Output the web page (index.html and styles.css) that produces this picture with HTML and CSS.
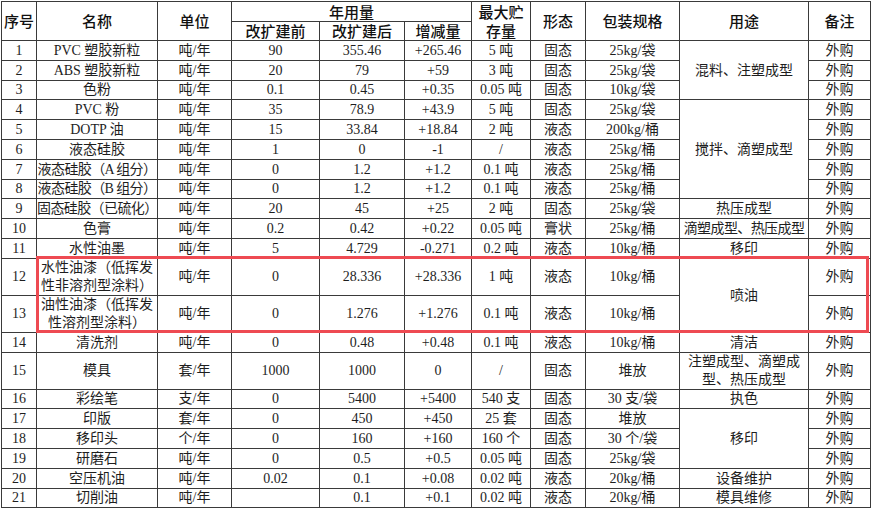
FILE: index.html
```html
<!DOCTYPE html>
<html lang="zh-CN">
<head>
<meta charset="utf-8">
<title>原辅材料用量表</title>
<link rel="stylesheet" href="styles.css">
</head>
<body>
<div class="wrap">
<table class="tbl">
<colgroup>
<col class="c1"><col class="c2"><col class="c3"><col class="c4"><col class="c5"><col class="c6"><col class="c7"><col class="c8"><col class="c9"><col class="c10"><col class="c11">
</colgroup>
<thead>
<tr class="h1">
<th rowspan="2">序号</th><th rowspan="2">名称</th><th rowspan="2">单位</th><th colspan="3">年用量</th><th rowspan="2" class="two">最大贮<br>存量</th><th rowspan="2">形态</th><th rowspan="2">包装规格</th><th rowspan="2">用途</th><th rowspan="2">备注</th>
</tr>
<tr class="h2"><th>改扩建前</th><th>改扩建后</th><th>增减量</th></tr>
</thead>
<tbody>
<tr><td>1</td><td>PVC 塑胶新粒</td><td>吨/年</td><td>90</td><td>355.46</td><td>+265.46</td><td>5 吨</td><td>固态</td><td>25kg/袋</td><td rowspan="3">混料、注塑成型</td><td>外购</td></tr>
<tr><td>2</td><td>ABS 塑胶新粒</td><td>吨/年</td><td>20</td><td>79</td><td>+59</td><td>3 吨</td><td>固态</td><td>25kg/袋</td><td>外购</td></tr>
<tr><td>3</td><td>色粉</td><td>吨/年</td><td>0.1</td><td>0.45</td><td>+0.35</td><td>0.05 吨</td><td>固态</td><td>10kg/袋</td><td>外购</td></tr>
<tr><td>4</td><td>PVC 粉</td><td>吨/年</td><td>35</td><td>78.9</td><td>+43.9</td><td>5 吨</td><td>固态</td><td>25kg/袋</td><td rowspan="5">搅拌、滴塑成型</td><td>外购</td></tr>
<tr><td>5</td><td>DOTP 油</td><td>吨/年</td><td>15</td><td>33.84</td><td>+18.84</td><td>2 吨</td><td>液态</td><td>200kg/桶</td><td>外购</td></tr>
<tr><td>6</td><td>液态硅胶</td><td>吨/年</td><td>1</td><td>0</td><td>-1</td><td>/</td><td>液态</td><td>25kg/桶</td><td>外购</td></tr>
<tr><td>7</td><td class="tight">液态硅胶（A 组分）</td><td>吨/年</td><td>0</td><td>1.2</td><td>+1.2</td><td>0.1 吨</td><td>液态</td><td>25kg/桶</td><td>外购</td></tr>
<tr><td>8</td><td class="tight">液态硅胶（B 组分）</td><td>吨/年</td><td>0</td><td>1.2</td><td>+1.2</td><td>0.1 吨</td><td>液态</td><td>25kg/桶</td><td>外购</td></tr>
<tr><td>9</td><td class="tight">固态硅胶（已硫化）</td><td>吨/年</td><td>20</td><td>45</td><td>+25</td><td>2 吨</td><td>固态</td><td>25kg/袋</td><td>热压成型</td><td>外购</td></tr>
<tr><td>10</td><td>色膏</td><td>吨/年</td><td>0.2</td><td>0.42</td><td>+0.22</td><td>0.05 吨</td><td>膏状</td><td>25kg/桶</td><td class="tight">滴塑成型、热压成型</td><td>外购</td></tr>
<tr><td>11</td><td>水性油墨</td><td>吨/年</td><td>5</td><td>4.729</td><td>-0.271</td><td>0.2 吨</td><td>液态</td><td>10kg/桶</td><td>移印</td><td>外购</td></tr>
<tr class="tall"><td>12</td><td class="multi">水性油漆（低挥发<br>性非溶剂型涂料）</td><td>吨/年</td><td>0</td><td>28.336</td><td>+28.336</td><td>1 吨</td><td>液态</td><td>10kg/桶</td><td rowspan="2">喷油</td><td>外购</td></tr>
<tr class="tall"><td>13</td><td class="multi">油性油漆（低挥发<br>性溶剂型涂料）</td><td>吨/年</td><td>0</td><td>1.276</td><td>+1.276</td><td>0.1 吨</td><td>液态</td><td>10kg/桶</td><td>外购</td></tr>
<tr><td>14</td><td>清洗剂</td><td>吨/年</td><td>0</td><td>0.48</td><td>+0.48</td><td>0.1 吨</td><td>液态</td><td>10kg/桶</td><td>清洁</td><td>外购</td></tr>
<tr class="tall"><td>15</td><td>模具</td><td>套/年</td><td>1000</td><td>1000</td><td>0</td><td>/</td><td>固态</td><td>堆放</td><td class="multi">注塑成型、滴塑成<br>型、热压成型</td><td>外购</td></tr>
<tr><td>16</td><td>彩绘笔</td><td>支/年</td><td>0</td><td>5400</td><td>+5400</td><td>540 支</td><td>固态</td><td>30 支/袋</td><td>执色</td><td>外购</td></tr>
<tr><td>17</td><td>印版</td><td>套/年</td><td>0</td><td>450</td><td>+450</td><td>25 套</td><td>固态</td><td>堆放</td><td rowspan="3">移印</td><td>外购</td></tr>
<tr><td>18</td><td>移印头</td><td>个/年</td><td>0</td><td>160</td><td>+160</td><td>160 个</td><td>固态</td><td>30 个/袋</td><td>外购</td></tr>
<tr><td>19</td><td>研磨石</td><td>吨/年</td><td>0</td><td>0.5</td><td>+0.5</td><td>0.05 吨</td><td>固态</td><td>25kg/袋</td><td>外购</td></tr>
<tr><td>20</td><td>空压机油</td><td>吨/年</td><td>0.02</td><td>0.1</td><td>+0.08</td><td>0.02 吨</td><td>液态</td><td>20kg/桶</td><td>设备维护</td><td>外购</td></tr>
<tr><td>21</td><td>切削油</td><td>吨/年</td><td></td><td>0.1</td><td>+0.1</td><td>0.02 吨</td><td>液态</td><td>20kg/桶</td><td>模具维修</td><td>外购</td></tr>
</tbody>
</table>
<div class="highlight"></div>
</div>
</body>
</html>
```

FILE: styles.css
```css
html, body {
  margin: 0;
  padding: 0;
  background: #ffffff;
}

.wrap {
  position: relative;
  width: 874px;
  height: 510px;
  padding: 1px 0 0 1px;
  box-sizing: border-box;
}

.tbl {
  border-collapse: collapse;
  table-layout: fixed;
  width: 870px;
  font-family: "Liberation Serif", "Noto Sans CJK SC", serif;
  font-size: 14px;
  color: #1e1e1e;
}

.c1 { width: 35px; }
.c2 { width: 121px; }
.c3 { width: 74px; }
.c4 { width: 88px; }
.c5 { width: 85px; }
.c6 { width: 67px; }
.c7 { width: 59px; }
.c8 { width: 55px; }
.c9 { width: 94px; }
.c10 { width: 129px; }
.c11 { width: 62px; }

.tbl th,
.tbl td {
  border: 1px solid #3a3a3a;
  padding: 0;
  text-align: center;
  vertical-align: middle;
  white-space: nowrap;
  overflow: hidden;
  line-height: 17px;
}

.tbl th {
  font-family: "Noto Sans CJK SC", sans-serif;
  font-weight: 500;
  font-size: 15px;
  color: #111;
  line-height: 18px;
}

.tbl th.two {
  line-height: 19px;
}

.tbl .h1 { height: 20px; }
.tbl .h2 { height: 19px; }

.tbl tbody tr { height: 19.8px; }
.tbl tbody tr.tall { height: 37px; }

.tbl td.tight {
  letter-spacing: -0.6px;
}

.tbl td.multi {
  line-height: 18px;
}

.highlight {
  position: absolute;
  left: 36px;
  top: 256px;
  width: 833px;
  height: 77px;
  border: 3px solid #ee4a52;
  box-sizing: border-box;
  pointer-events: none;
}
```
